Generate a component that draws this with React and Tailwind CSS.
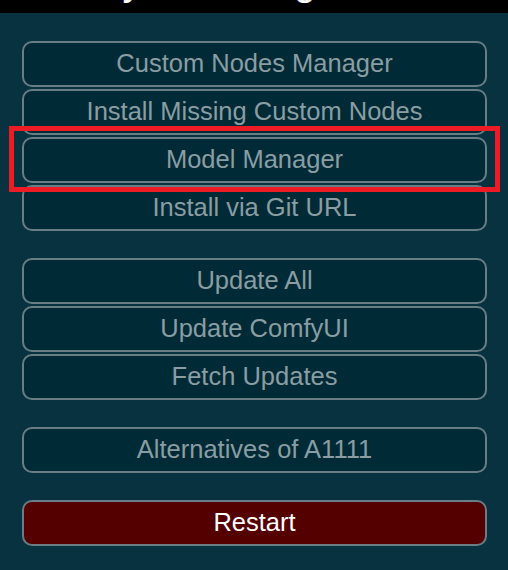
import React from "react";

const font = { fontFamily: '"Liberation Sans", Arial, sans-serif' };

function Btn({ children, danger }) {
  return (
    <button
      className={
        danger
          ? "h-[46px] w-full rounded-[10px] border-2 border-[#687d84] bg-[#550000] pb-[1px] text-[25.5px] leading-none text-white"
          : "h-[46px] w-full rounded-[10px] border-2 border-[#687d84] bg-[#002a36] pb-[1px] text-[25.5px] leading-none text-[#8a9da2]"
      }
      style={font}
    >
      {children}
    </button>
  );
}

export default function App() {
  return (
    <div className="relative h-[570px] w-[508px] overflow-hidden bg-[#08323f]" style={font}>
      <div className="h-[13px] overflow-hidden bg-black">
        <div className="-mt-[39px] pl-[27px] text-[40px] leading-[40px] whitespace-nowrap text-white">
          ComfyUI Manager Menu
        </div>
      </div>
      <div className="flex flex-col pl-[22px] pr-[21px] pt-[28px]">
        <div className="flex flex-col gap-[2px]">
          <Btn>Custom Nodes Manager</Btn>
          <Btn>Install Missing Custom Nodes</Btn>
          <Btn>Model Manager</Btn>
          <Btn>Install via Git URL</Btn>
        </div>
        <div className="mt-[27px] flex flex-col gap-[2px]">
          <Btn>Update All</Btn>
          <Btn>Update ComfyUI</Btn>
          <Btn>Fetch Updates</Btn>
        </div>
        <div className="mt-[27px]">
          <Btn>Alternatives of A1111</Btn>
        </div>
        <div className="mt-[27px]">
          <Btn danger>Restart</Btn>
        </div>
      </div>
      <div className="pointer-events-none absolute left-[9px] top-[126px] h-[66px] w-[491px] border-[5px] border-[#ed1c24]" />
    </div>
  );
}
